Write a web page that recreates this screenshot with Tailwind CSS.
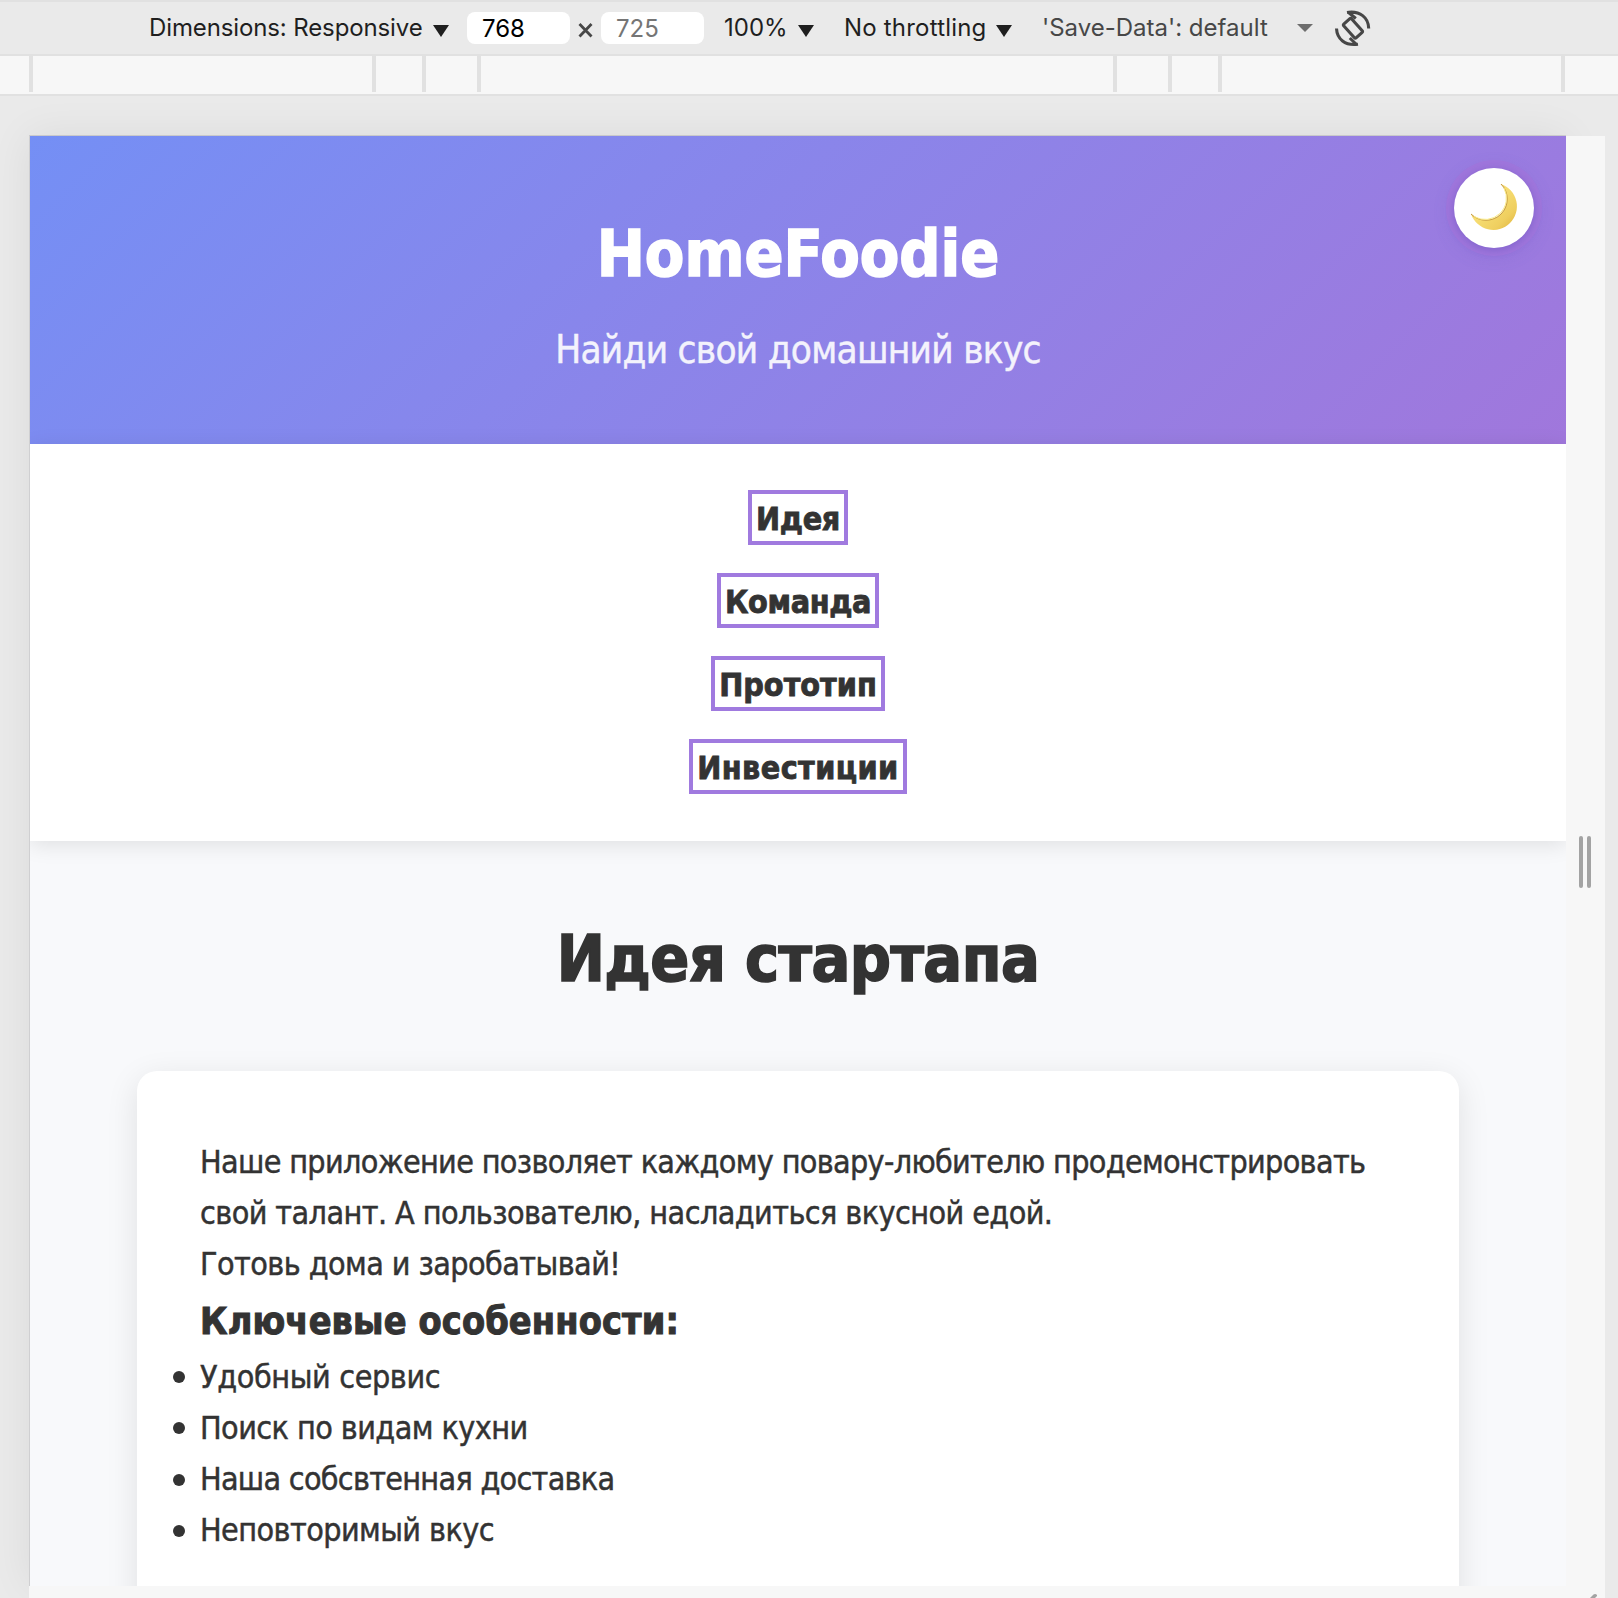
<!DOCTYPE html>
<html lang="ru">
<head>
<meta charset="utf-8">
<title>HomeFoodie</title>
<script src="https://cdn.jsdelivr.net/npm/@tailwindcss/browser@4"></script>
</head>
<body class="flex h-[1598px] w-[1618px] flex-col overflow-hidden bg-[#eaeaea]">

<!-- device toolbar -->
<div class="flex h-14 shrink-0 items-center border-y-2 border-[#e1e1e1] pl-[149px] font-[Inter,sans-serif] text-2xl leading-[34px] whitespace-nowrap text-[#1f1f1f]">
  <span class="w-[284px] tracking-[-0.12px]">Dimensions: Responsive</span>
  <svg class="mt-1.5 h-3 w-4 shrink-0" viewBox="0 0 16 12"><path d="M0 0h16L8 12z" fill="#1f1f1f"/></svg>
  <span class="ml-[18px] h-8 w-[103px] rounded-lg bg-white pl-[15px] text-black">768</span>
  <svg class="mx-2 mt-1 h-4 w-[15px] shrink-0" viewBox="0 0 15 16"><path d="M1.500 2l12 12.500M13.500 2l-12 12.500" stroke="#474747" stroke-width="2.8" fill="none"/></svg>
  <span class="h-8 w-[103px] rounded-lg bg-white pl-[15px] text-[#757575]">725</span>
  <span class="ml-[20px] w-[74px]">100%</span>
  <svg class="mt-1.5 h-3 w-4 shrink-0" viewBox="0 0 16 12"><path d="M0 0h16L8 12z" fill="#1f1f1f"/></svg>
  <span class="ml-[30px] w-[152px] tracking-[0.2px]">No throttling</span>
  <svg class="mt-1.5 h-3 w-4 shrink-0" viewBox="0 0 16 12"><path d="M0 0h16L8 12z" fill="#1f1f1f"/></svg>
  <span class="ml-[30px] w-[255px] text-[#474747]">'Save-Data': default</span>
  <svg class="h-2 w-4 shrink-0" viewBox="0 0 16 8"><path d="M0 0h16L8 8z" fill="#6e6e6e"/></svg>
  <svg class="ml-[17px] h-[45px] w-[45px] shrink-0" viewBox="1330 5.500 45 45" fill="none" stroke="#474747" stroke-width="3.1">
    <path d="M1347 12C1360 10 1368.500 17 1368.700 28M1348 11.500L1355.800 18"/>
    <path d="M1336.500 28C1337 38.500 1345 45.500 1358 43.700M1357 44.500L1349.800 37.500"/>
    <rect x="1343.800" y="22.500" width="18.400" height="10.500" rx="1.500" transform="rotate(48 1353 27.700)"/>
  </svg>
</div>

<!-- media-size ruler -->
<div class="flex h-10 shrink-0 border-b-2 border-[#e1e1e1] bg-[#f7f7f7] pb-0.5">
  <i class="ml-[29px] w-1 bg-[#e1e1e1]"></i>
  <i class="ml-[339px] w-1 bg-[#e1e1e1]"></i>
  <i class="ml-[46px] w-1 bg-[#e1e1e1]"></i>
  <i class="ml-[51px] w-1 bg-[#e1e1e1]"></i>
  <i class="ml-[632px] w-1 bg-[#e1e1e1]"></i>
  <i class="ml-[51px] w-1 bg-[#e1e1e1]"></i>
  <i class="ml-[46px] w-1 bg-[#e1e1e1]"></i>
  <i class="ml-[339px] w-1 bg-[#e1e1e1]"></i>
</div>

<div class="flex min-h-0 flex-1 overflow-hidden pt-10 pl-[29px]">
  <div class="flex w-[1576px] flex-col">
    <div class="flex h-[1450px] shrink-0">
      <!-- emulated page -->
      <div class="w-[1537px] shrink-0 border-l border-[#cfcfd1] shadow-[0_0_40px_rgba(0,0,0,0.07),0_-1px_0_#cfcfd1]">
        <div class="h-full overflow-hidden bg-[#f8f9fb] font-['DejaVu_Sans_Condensed','DejaVu_Sans',sans-serif] text-[32px] leading-[51.2px] text-[#333] [-webkit-text-stroke:0.45px]">
          <header class="relative h-[308px] bg-linear-135 from-[#748ff5] to-[#a077dc] pt-[67px] text-center text-white">
            <h1 class="text-[64px] leading-[102.4px] font-bold [-webkit-text-stroke:1.6px]">HomeFoodie</h1>
            <p class="mt-[13.500px] text-[38.4px] leading-[61.4px] tracking-[-0.75px] opacity-90">Найди свой домашний вкус</p>
            <button class="absolute top-8 right-8 size-20 rounded-full bg-white shadow-[0_2px_8px_rgba(80,70,180,0.4),0_0_0_8px_#9f76dc,0_4px_20px_rgba(100,80,190,0.3)]">
              <svg class="size-20" viewBox="0 0 80 80">
                <defs>
                  <linearGradient id="m" x1="0" y1="0" x2="1" y2="1"><stop offset="0.45" stop-color="#f6dc72"/><stop offset="0.75" stop-color="#efcf5f"/><stop offset="1" stop-color="#dfb13b"/></linearGradient>
                </defs>
                <path d="M47 16A23.600 23.600 0 1 1 17 46A20.900 20.900 0 1 0 47 16Z" fill="url(#m)"/>
                <path d="M17 46A20.900 20.900 0 1 0 47 16" fill="none" stroke="#c4973c" stroke-width="1"/>
                <path d="M20 48.500A21.500 21.500 0 0 0 50 20" fill="none" stroke="#fbec85" stroke-width="1"/>
              </svg>
            </button>
          </header>
          <nav class="relative flex h-[397px] flex-col items-center gap-7 bg-white pt-[46px] text-center leading-[44px] font-bold whitespace-nowrap shadow-[0_4px_20px_rgba(0,0,0,0.1)] [-webkit-text-stroke:0.8px]">
            <a class="h-[55px] w-[100px] border-4 border-[#a07adf] pt-[3px] tracking-[-0.35px]">Идея</a>
            <a class="h-[55px] w-[162px] border-4 border-[#a07adf] pt-[3px] tracking-[-0.4px]">Команда</a>
            <a class="h-[55px] w-[174px] border-4 border-[#a07adf] pt-[3px]">Прототип</a>
            <a class="h-[55px] w-[218px] border-4 border-[#a07adf] pt-[3px] tracking-[0.4px]">Инвестиции</a>
          </nav>
          <section class="pt-[67px]">
            <h2 class="h-[163px] text-center text-[64px] leading-[102.4px] font-bold tracking-[-0.5px] [-webkit-text-stroke:1.6px]">Идея стартапа</h2>
            <div class="mx-auto h-[700px] w-[1322px] rounded-[20px] bg-white px-[63px] pt-[66px] whitespace-nowrap shadow-[0_8px_32px_rgba(0,0,0,0.1)]">
              <p class="tracking-[-0.67px]">Наше приложение позволяет каждому повару-любителю продемонстрировать</p>
              <p class="tracking-[-0.58px]">свой талант. А пользователю, насладиться вкусной едой.</p>
              <p class="tracking-[-0.57px]">Готовь дома и заробатывай!</p>
              <h3 class="pt-px text-[37.44px] leading-[59.900px] font-bold tracking-[0.15px] [-webkit-text-stroke:1px]">Ключевые особенности:</h3>
              <ul>
                <li class="flex items-center"><i class="-ml-[27px] mr-[15px] size-3 rounded-full bg-[#333]"></i><span class="tracking-[-0.38px]">Удобный сервис</span></li>
                <li class="flex items-center"><i class="-ml-[27px] mr-[15px] size-3 rounded-full bg-[#333]"></i><span class="tracking-[-0.57px]">Поиск по видам кухни</span></li>
                <li class="flex items-center"><i class="-ml-[27px] mr-[15px] size-3 rounded-full bg-[#333]"></i><span class="tracking-[-0.72px]">Наша собсвтенная доставка</span></li>
                <li class="flex items-center"><i class="-ml-[27px] mr-[15px] size-3 rounded-full bg-[#333]"></i><span class="tracking-[-0.57px]">Неповторимый вкус</span></li>
              </ul>
            </div>
          </section>
        </div>
      </div>
      <!-- right resize handle -->
      <div class="relative z-10 flex w-[39px] items-center gap-1 bg-[#f7f7f7] pt-[2px] pl-[13px]">
        <i class="h-[52px] w-1 rounded-full bg-[#a3a3a3]"></i>
        <i class="h-[52px] w-1 rounded-full bg-[#a3a3a3]"></i>
      </div>
    </div>
    <div class="relative z-10 flex h-3 shrink-0 items-end justify-end bg-[#f7f7f7] pr-2">
      <svg class="h-1 w-[7px]" viewBox="0 0 7 4"><path d="M0 4l3.500-3.500q2-1 3.500.5v1L5 4z" fill="#a3a3a3"/></svg>
    </div>
  </div>
</div>
</body>
</html>
